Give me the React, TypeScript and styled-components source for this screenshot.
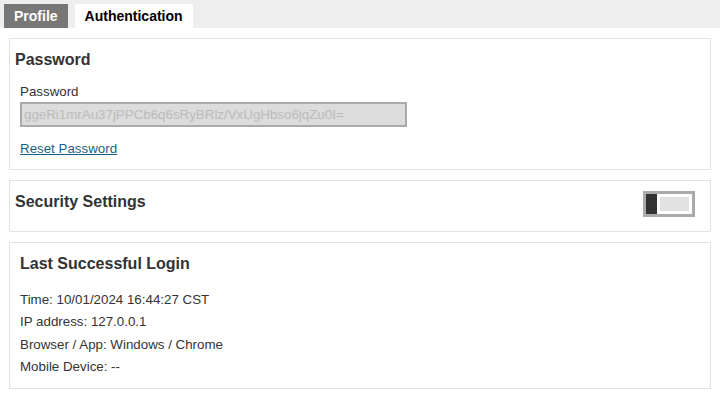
import styled, { createGlobalStyle } from "styled-components";

const GlobalStyle = createGlobalStyle`
    body {
        margin: 0;
        background: #fff;
        font-family: "Liberation Sans", Arial, sans-serif;
        color: #333;
    }
`;

const TabBar = styled.div`
    display: flex;
    align-items: flex-end;
    gap: 7px;
    height: 28px;
    padding: 0 4px;
    background: #eeeeee;
    box-sizing: border-box;
`;

const Tab = styled.div<{ $active?: boolean }>`
    height: 24px;
    padding: 0 10px;
    display: flex;
    align-items: center;
    font-size: 14px;
    font-weight: bold;
    background: ${p => (p.$active ? "#fff" : "#777")};
    color: ${p => (p.$active ? "#000" : "#fff")};
`;

const Content = styled.div`
    display: flex;
    flex-direction: column;
    gap: 10px;
    padding: 10px 9px 0 9px;
    width: 702px;
`;

const Card = styled.section<{ $pad?: string }>`
    border: 1px solid #e3e3e3;
    padding: ${p => p.$pad ?? "10px 5px"};
    display: flex;
    flex-direction: column;
`;

const CardTitle = styled.h2<{ $offset?: number }>`
    margin: ${p => p.$offset ?? 0}px 0 0 0;
    font-size: 16px;
    font-weight: bold;
    color: #333;
`;

const FieldBlock = styled.div`
    display: flex;
    flex-direction: column;
    padding-left: 5px;
    margin-top: 15px;
`;

const Label = styled.label`
    font-size: 13.33px;
    color: #333;
`;

const Input = styled.input`
    margin-top: 3px;
    width: 387px;
    height: 25px;
    box-sizing: border-box;
    padding: 0 2px;
    border: 2px solid #aaa;
    background: #dcdcdc;
    color: #bbb;
    font-family: "Liberation Sans", Arial, sans-serif;
    font-size: 13.33px;
    outline: none;
`;

const ResetLink = styled.a`
    margin-top: 14px;
    font-size: 13.33px;
    color: #1f5f87;
    text-decoration: underline;
    cursor: pointer;
    align-self: flex-start;
`;

const Row = styled.div`
    display: flex;
    align-items: flex-start;
    justify-content: space-between;
`;

const Toggle = styled.div`
    width: 52px;
    height: 26px;
    box-sizing: border-box;
    border: 3px solid #aaa;
    background: #fff;
    display: flex;
    align-items: stretch;
    margin-right: 10px;
`;

const Knob = styled.div`
    width: 11px;
    background: #333;
`;

const Track = styled.div`
    flex: 1;
    margin: 3px;
    background: #e2e2e2;
`;

const InfoList = styled.div`
    display: flex;
    flex-direction: column;
    margin-top: 16px;
`;

const InfoLine = styled.div`
    font-size: 13.33px;
    line-height: 22.3px;
    color: #333;
`;

export default function App() {
    return (
        <>
            <GlobalStyle />
            <TabBar>
                <Tab>Profile</Tab>
                <Tab $active>Authentication</Tab>
            </TabBar>
            <Content>
                <Card $pad="12px 5px 13px 5px">
                    <CardTitle>Password</CardTitle>
                    <FieldBlock>
                        <Label>Password</Label>
                        <Input type="text" value="ggeRi1mrAu37jPPCb6q6sRyBRlz/VxUgHbso6jqZu0I=" disabled readOnly />
                        <ResetLink>Reset Password</ResetLink>
                    </FieldBlock>
                </Card>
                <Card $pad="10px 5px 14px 5px">
                    <Row>
                        <CardTitle $offset={2}>Security Settings</CardTitle>
                        <Toggle>
                            <Knob />
                            <Track />
                        </Toggle>
                    </Row>
                </Card>
                <Card $pad="12px 10px 10px 10px">
                    <CardTitle>Last Successful Login</CardTitle>
                    <InfoList>
                        <InfoLine>Time: 10/01/2024 16:44:27 CST</InfoLine>
                        <InfoLine>IP address: 127.0.0.1</InfoLine>
                        <InfoLine>Browser / App: Windows / Chrome</InfoLine>
                        <InfoLine>Mobile Device: --</InfoLine>
                    </InfoList>
                </Card>
            </Content>
        </>
    );
}
